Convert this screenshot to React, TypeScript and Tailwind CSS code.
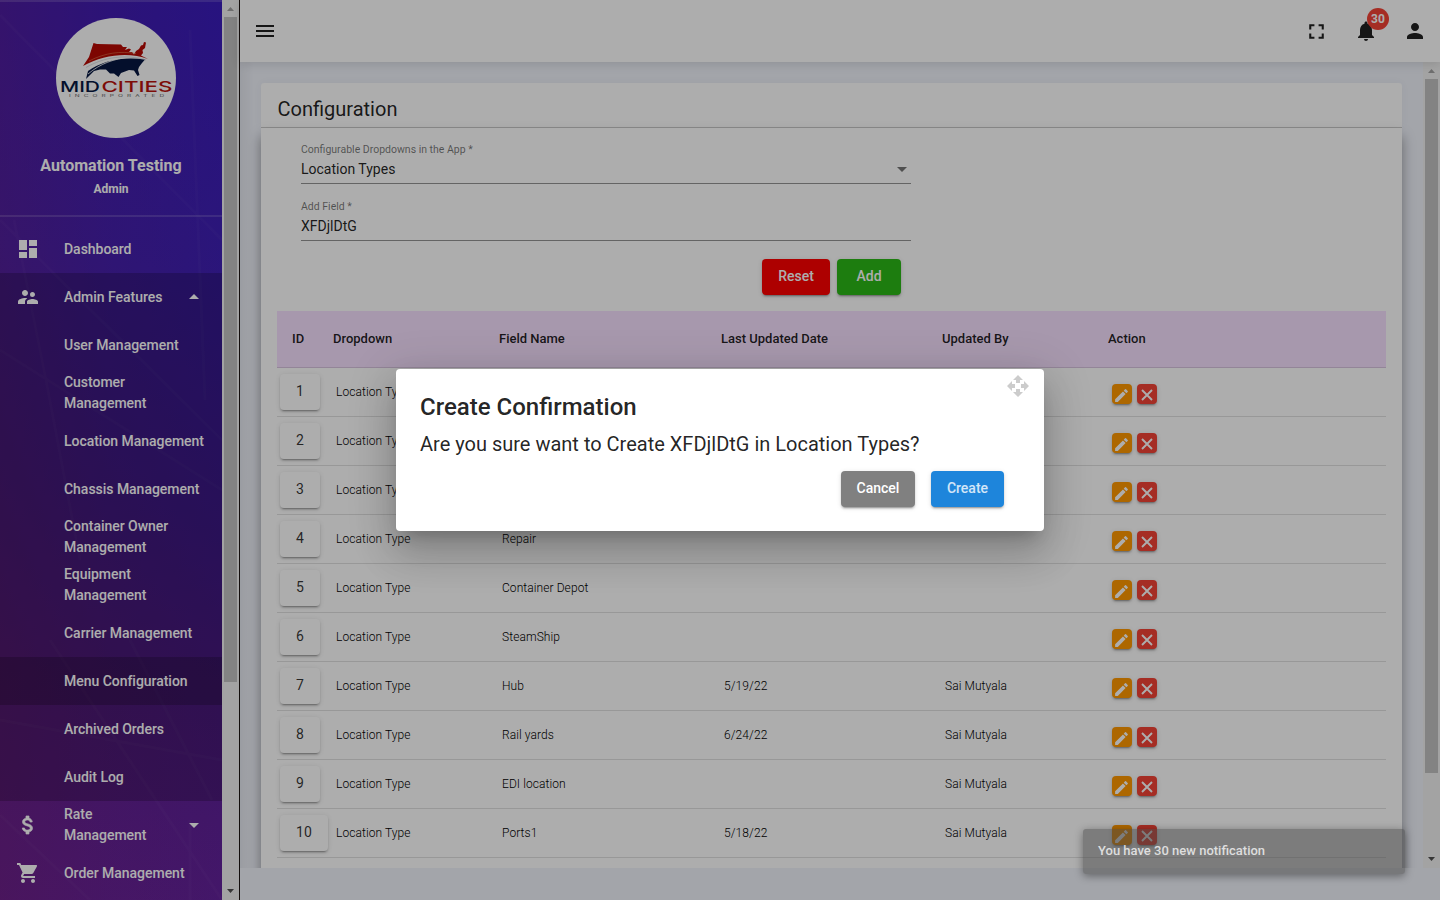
import {
  MdDashboard, MdSupervisorAccount, MdShoppingCart, MdMenu, MdFullscreen,
  MdNotifications, MdPerson, MdArrowDropDown, MdArrowDropUp, MdEdit, MdOpenWith,
} from "react-icons/md";

type Row = { id: number; field?: string; date?: string; by?: string };

const rows: Row[] = [
  { id: 1 },
  { id: 2 },
  { id: 3 },
  { id: 4, field: "Repair" },
  { id: 5, field: "Container Depot" },
  { id: 6, field: "SteamShip" },
  { id: 7, field: "Hub", date: "5/19/22", by: "Sai Mutyala" },
  { id: 8, field: "Rail yards", date: "6/24/22", by: "Sai Mutyala" },
  { id: 9, field: "EDI location", by: "Sai Mutyala" },
  { id: 10, field: "Ports1", date: "5/18/22", by: "Sai Mutyala" },
];

const adminItems = [
  "User Management", "Customer Management", "Location Management", "Chassis Management",
  "Container Owner Management", "Equipment Management", "Carrier Management",
  "Menu Configuration", "Archived Orders", "Audit Log",
];

const raised = "shadow-[0_3px_1px_-2px_rgba(0,0,0,0.2),0_2px_2px_0_rgba(0,0,0,0.14),0_1px_5px_0_rgba(0,0,0,0.12)]";
const grid = "grid grid-cols-[56px_166px_222px_221px_166px_1fr]";

function Logo() {
  return (
    <svg width="120" height="120" viewBox="0 0 120 120" className="ml-[10px]">
      <circle cx="60" cy="60" r="60" fill="#fff" />
      <path d="M37.500 25 L41 26 L65 26.500 L67 29 L71 29 L69 32 L73 30.500 L75 31.500 L73 34 L76 34 L78 36.500 L80 33 L83 31 L85 27.500 L87 27 L88 24 L90 24.500 L89 30 L86.500 32 L87 35 L85 37.500 L92 41 C74 34 48 36 27 48 L33 39 Z" fill="#b80a04" />
      <path d="M33 43 C50 34.500 64 33 80 35.500" fill="none" stroke="#e07a50" strokeWidth="0.6" />
      <path d="M30 61 L32 53 C46 43 66 38 89 41.500 L86 45 L83 49 L82 52 L83.500 57 L81.500 58 L78 52.500 L73 52 L69 53.500 L65 55 L62.500 59 L58 55.500 L54 55.500 L50 51.500 L44 51.500 L38 53 Z" fill="#061742" />
      <path d="M32 56 C45 45 58 41 74 39" fill="none" stroke="#fff" strokeWidth="0.8" />
      <path d="M30 49.500 C48 39 70 36 90 42" fill="none" stroke="#b9bdc8" strokeWidth="0.5" />
      <text x="4" y="74" fontFamily="Inter, sans-serif" fontSize="15" fontWeight="500" fill="#061742" textLength="40" lengthAdjust="spacingAndGlyphs">MID</text>
      <text x="45.500" y="74" fontFamily="Inter, sans-serif" fontSize="15" fontWeight="500" fill="#b8120c" textLength="71" lengthAdjust="spacingAndGlyphs">CITIES</text>
      <g transform="translate(13 79) scale(1.7 1)">
        <text x="0" y="0" fontFamily="Inter, sans-serif" fontSize="3.8" fill="#666" textLength="56">INCORPORATED</text>
      </g>
    </svg>
  );
}

function Dollar() {
  return (
    <svg width="24" height="24" viewBox="0 0 24 24" fill="currentColor" stroke="currentColor" strokeWidth="0.7" className="ml-4 mr-6">
      <path d="M11.800 10.900c-2.270-.59-3-1.200-3-2.150 0-1.090 1.010-1.850 2.700-1.850 1.780 0 2.440.85 2.500 2.100h2.210c-.07-1.720-1.120-3.300-3.210-3.810V3h-3v2.160c-1.940.42-3.500 1.680-3.500 3.610 0 2.310 1.910 3.460 4.700 4.130 2.500.6 3 1.480 3 2.410 0 .69-.49 1.790-2.700 1.790-2.060 0-2.870-.92-2.980-2.100h-2.200c.12 2.190 1.760 3.420 3.680 3.830V21h3v-2.150c1.950-.37 3.500-1.500 3.500-3.550 0-2.840-2.430-3.810-4.700-4.400z" />
    </svg>
  );
}

function Cross() {
  return (
    <svg width="12" height="12" viewBox="0 0 12 12" fill="none" stroke="currentColor" strokeWidth="1.9">
      <path d="M1 1L11 11M11 1L1 11" />
    </svg>
  );
}

function Scrollbar({ thumb }: { thumb: string }) {
  return (
    <div className="flex w-[17px] shrink-0 flex-col items-center bg-[#f1f1f1]">
      <svg width="17" height="17" viewBox="0 0 17 17"><path d="M5 11h7L8.500 7z" fill="#a3a3a3" /></svg>
      <div className={`w-[13px] bg-[#c1c1c1] ${thumb}`} />
      <div className="flex-1" />
      <svg width="17" height="17" viewBox="0 0 17 17"><path d="M5 6h7L8.500 10z" fill="#505050" /></svg>
    </div>
  );
}

function Sidebar() {
  return (
    <aside className="flex w-[240px] shrink-0 bg-[#1d1512]">
      <div className="relative w-[222px] overflow-hidden bg-[linear-gradient(190deg,#3a1cbc_0%,#4020b4_30%,#4a1fa4_55%,#5a2098_75%,#66229c_100%)] text-white">
        <div className="absolute inset-0 bg-[linear-gradient(90deg,rgba(125,28,90,0.28),rgba(125,28,90,0.1)_50%,rgba(125,28,90,0))]" />
        <svg className="absolute inset-0" width="222" height="900" fill="none" stroke="#fff" strokeOpacity="0.025" strokeWidth="3">
          <path d="M0 15L222 240M0 220L222 440M14 220L46 380L80 560M190 30L205 400M0 350L222 490M0 720L222 760M130 640L212 800M190 820V900M0 815L90 900M50 640L222 900" />
        </svg>
        <div className="relative flex h-[217px] flex-col items-center border-y-2 border-white/15 pt-4">
          <Logo />
          <div className="mt-[16px] text-[16px] font-bold leading-[24px]">Automation Testing</div>
          <div className="mt-px text-[12px] font-bold leading-[20px]">Admin</div>
        </div>
        <nav className="relative pt-2 text-[14px] font-medium leading-[21px] tracking-[-0.03px]">
          <div className="flex h-12 items-center">
            <MdDashboard size={24} className="ml-4 mr-6" />Dashboard
          </div>
          <div className="bg-black/20">
            <div className="flex h-12 items-center">
              <MdSupervisorAccount size={24} className="ml-4 mr-6" />
              <span className="flex-1">Admin Features</span>
              <MdArrowDropUp size={24} className="mr-4" />
            </div>
            {adminItems.map((t) => (
              <div key={t} className={`flex h-12 items-center pl-16 pr-3 ${t === "Menu Configuration" ? "bg-black/20" : ""}`}>
                <span className={t.startsWith("Customer") || t.startsWith("Equipment") ? "w-[100px]" : ""}>{t}</span>
              </div>
            ))}
          </div>
          <div className="flex h-12 items-center">
            <Dollar />
            <span className="w-[106px]">Rate<br />Management</span>
            <MdArrowDropDown size={24} className="ml-3" />
          </div>
          <div className="flex h-12 items-center">
            <MdShoppingCart size={24} className="ml-4 mr-6" />Order Management
          </div>
        </nav>
      </div>
      <Scrollbar thumb="h-[665px]" />
    </aside>
  );
}

function Field({ label, value, select }: { label: string; value: string; select?: boolean }) {
  return (
    <div className="flex h-[57px] flex-col">
      <div className="h-[13px] text-[10.500px] leading-[13px] text-black/54">{label}</div>
      <div className="flex h-[28px] items-center justify-between border-b border-black/42 text-[14px] leading-[16px] text-black/87">
        <span className="pb-[2px]">{value}</span>
        {select && <svg width="10" height="5" viewBox="0 0 10 5" className="mr-1"><path d="M0 0h10L5 5z" fill="#757575" /></svg>}
      </div>
    </div>
  );
}

function Table() {
  return (
    <div className="mx-4">
      <div className={`${grid} h-[57px] items-center border-b border-black/12 bg-[#f7e1ff] text-[13px] font-medium text-black/87`}>
        <span className="pl-[15px]">ID</span><span>Dropdown</span><span>Field Name</span>
        <span>Last Updated Date</span><span>Updated By</span><span>Action</span>
      </div>
      {rows.map((r) => (
        <div key={r.id} className={`${grid} h-[49px] items-center border-b border-black/12 text-[12px] font-light tracking-[0.08px] text-black`}>
          <div className="pl-[3px]">
            <button className={`flex h-9 ${r.id === 10 ? "w-12" : "w-10"} items-center justify-center rounded-[4px] bg-white pb-px text-[14px] font-normal text-black/80 ${raised}`}>{r.id}</button>
          </div>
          <span className="pl-[3px]">Location Type</span>
          <span className="pl-[3px]">{r.field}</span>
          <span className="pl-[3px]">{r.date}</span>
          <span className="pl-[3px]">{r.by}</span>
          <div className="flex gap-[5px] pl-1 pt-[4px] text-white">
            <span className={`flex size-5 items-center justify-center rounded-[4px] bg-[#ff9800] pr-px pt-[2px] ${raised}`}><MdEdit size={17} /></span>
            <span className={`flex size-5 items-center justify-center rounded-[4px] bg-[#f44336] pr-px pt-[2px] ${raised}`}><Cross /></span>
          </div>
        </div>
      ))}
    </div>
  );
}

export default function App() {
  return (
    <div className="relative flex h-[900px] w-[1440px] overflow-hidden bg-[#f0f3fb] font-[Roboto,sans-serif]">
      <Sidebar />
      <div className="flex flex-1 flex-col">
        <header className="relative z-10 flex h-[62px] shrink-0 items-center bg-white text-black/87 shadow-[0_2px_10px_rgba(0,0,0,0.12)]">
          <MdMenu size={24} className="ml-[13px]" />
          <div className="flex-1" />
          <MdFullscreen size={25} className="mr-[25px]" />
          <div className="relative mr-[25px]">
            <MdNotifications size={24} />
            <span className="absolute left-[13px] top-[-11px] flex size-[22px] items-center justify-center rounded-full bg-[#f44336] text-[12px] font-bold text-white">30</span>
          </div>
          <MdPerson size={24} className="mr-[13px]" />
        </header>
        <div className="flex h-[806px] overflow-hidden bg-[linear-gradient(90deg,rgba(0,0,0,0.05),transparent_14px)]">
          <main className="flex-1 overflow-hidden pl-[21px] pr-[21px] pt-[21px]">
            <div className="h-[45px] rounded-t-[3px] border-b border-black/20 bg-white pl-[16.500px] pt-[12px] text-[20px] leading-[28px] text-black/87 shadow-[0_0_10px_rgba(0,0,0,0.04)]">Configuration</div>
            <div className="h-[800px] bg-white shadow-[0_8px_12px_rgba(0,0,0,0.38)]">
              <div className="ml-10 w-[610px] pt-[15px]">
                <Field label="Configurable Dropdowns in the App *" value="Location Types" select />
                <Field label="Add Field *" value="XFDjlDtG" />
                <div className="flex h-[54px] justify-end gap-[7px] pr-[10px] pt-[2px] text-[14px] font-medium text-white">
                  <button className={`h-9 w-[68px] rounded-[4px] bg-[#ff0000] pb-[2px] ${raised}`}>Reset</button>
                  <button className={`h-9 w-16 rounded-[4px] bg-[#2bb917] pb-[2px] ${raised}`}>Add</button>
                </div>
              </div>
              <Table />
            </div>
          </main>
          <Scrollbar thumb="h-[694px]" />
        </div>
      </div>

      <div className="absolute inset-0 z-20 flex items-center justify-center bg-black/32">
        <div className="relative h-[162px] w-[648px] rounded-[4px] bg-white px-6 pt-[22px] text-black/87 shadow-[0_11px_15px_-7px_rgba(0,0,0,0.2),0_24px_38px_3px_rgba(0,0,0,0.14),0_9px_46px_8px_rgba(0,0,0,0.12)]">
          <MdOpenWith size={24} className="absolute right-[14px] top-[5px] text-[#ccc]" />
          <h2 className="text-[24px] font-medium leading-[32px]">Create Confirmation</h2>
          <p className="mt-[7px] text-[20px] leading-[28px]">Are you sure want to Create XFDjlDtG in Location Types?</p>
          <div className="mt-[13px] flex justify-end gap-4 pr-4 text-[14px] font-medium text-white">
            <button className={`h-9 w-[74px] rounded-[4px] bg-[#808080] pb-[2px] ${raised}`}>Cancel</button>
            <button className={`h-9 w-[73px] rounded-[4px] bg-[#1e85db] pb-[2px] text-white/80 ${raised}`}>Create</button>
          </div>
        </div>
      </div>
      <div className="absolute left-[1083px] top-[829px] z-30 flex h-[45px] w-[322px] items-center rounded-[3px] bg-[rgba(72,72,72,0.48)] pb-px pl-[15px] text-[13px] font-medium text-white/75 shadow-[0_2px_8px_rgba(0,0,0,0.4)]">
        You have 30 new notification
      </div>
    </div>
  );
}
